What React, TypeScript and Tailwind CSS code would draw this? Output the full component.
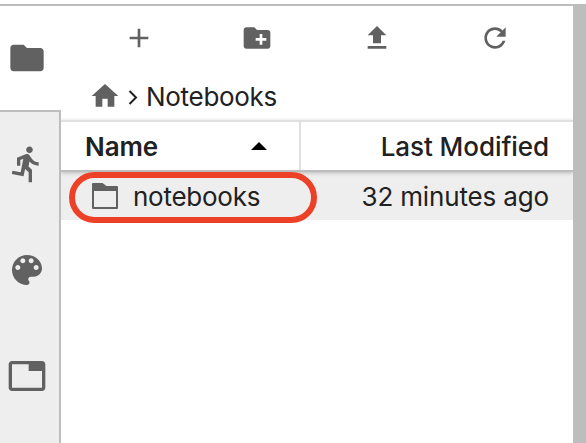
import React from "react";

function Icon({ d, className }: { d: string; className: string }) {
  return (
    <svg viewBox="0 0 24 24" fill="#616161" className={`block shrink-0 ${className}`}>
      <path d={d} />
    </svg>
  );
}

const FOLDER = "M10 4H4c-1.1 0-1.99.9-1.99 2L2 18c0 1.1.9 2 2 2h16c1.1 0 2-.9 2-2V8c0-1.1-.9-2-2-2h-8l-2-2z";
const RUN =
  "M13.49 5.48c1.1 0 2-.9 2-2s-.9-2-2-2-2 .9-2 2 .9 2 2 2zm-3.6 13.9l1-4.4 2.1 2v6h2v-7.5l-2.1-2 .6-3c1.3 1.5 3.3 2.5 5.5 2.5v-2c-1.9 0-3.5-1-4.3-2.4l-1-1.6c-.4-.6-1-1-1.7-1-.3 0-.5.1-.8.1l-5.2 2.2v4.7h2v-3.4l1.8-.7-1.6 8.1-4.9-1-.4 2 7 1.4z";
const PALETTE =
  "M12 3c-4.97 0-9 4.03-9 9s4.03 9 9 9c.83 0 1.5-.67 1.5-1.5 0-.39-.15-.74-.39-1.01-.23-.26-.38-.61-.38-.99 0-.83.67-1.5 1.5-1.5H16c2.76 0 5-2.24 5-5 0-4.42-4.03-8-9-8zm-5.5 9c-.83 0-1.5-.67-1.5-1.5S5.67 9 6.5 9 8 9.67 8 10.5 7.33 12 6.5 12zm3-4C8.67 8 8 7.33 8 6.5S8.67 5 9.5 5s1.5.67 1.5 1.5S10.33 8 9.5 8zm5 0c-.83 0-1.5-.67-1.5-1.5S13.67 5 14.5 5s1.5.67 1.5 1.5S15.33 8 14.5 8zm3 4c-.83 0-1.5-.67-1.5-1.5S16.67 9 17.5 9s1.5.67 1.5 1.5-.67 1.5-1.5 1.5z";
const TAB =
  "M21 3H3c-1.1 0-2 .9-2 2v14c0 1.1.9 2 2 2h18c1.1 0 2-.9 2-2V5c0-1.1-.9-2-2-2zm0 16H3V5h10v4h8v10z";
const ADD = "M19 13h-6v6h-2v-6H5v-2h6V5h2v6h6v2z";
const NEW_FOLDER =
  "M20 6h-8l-2-2H4c-1.11 0-1.99.89-1.99 2L2 18c0 1.11.89 2 2 2h16c1.11 0 2-.89 2-2V8c0-1.11-.89-2-2-2zm-1 8h-3v3h-2v-3h-3v-2h3V9h2v3h3v2z";
const UPLOAD = "M9 16h6v-6h4l-7-7-7 7h4zm-4 2h14v2H5z";
const REFRESH =
  "M17.65 6.35C16.2 4.9 14.21 4 12 4c-4.42 0-7.99 3.58-7.99 8s3.57 8 7.99 8c3.73 0 6.84-2.55 7.73-6h-2.08c-.82 2.33-3.04 4-5.65 4-3.31 0-6-2.69-6-6s2.69-6 6-6c1.66 0 3.14.69 4.22 1.78L13 11h7V4l-2.35 2.35z";
const HOME = "M10 20v-6h4v6h5v-8h3L12 3 2 12h3v8z";

function Sidebar() {
  return (
    <nav className="flex w-[61px] shrink-0 flex-col">
      <div className="h-[104px] pl-[7px] pt-8">
        <Icon d={FOLDER} className="size-10" />
      </div>
      <div className="flex grow flex-col gap-[66px] border-r-2 border-t-2 border-[#bdbdbd] bg-[#eeeeee] pl-[7px] pt-8">
        <Icon d={RUN} className="size-10" />
        <Icon d={PALETTE} className="size-10" />
        <Icon d={TAB} className="size-10" />
      </div>
    </nav>
  );
}

function FileBrowser() {
  return (
    <main className="flex w-[512px] shrink-0 flex-col overflow-hidden">
      <div className="flex h-16 pl-[62px] pt-4">
        <Icon d={ADD} className="size-8" />
        <Icon d={NEW_FOLDER} className="ml-[86px] size-8" />
        <Icon d={UPLOAD} className="ml-[88px] size-8" />
        <Icon d={REFRESH} className="ml-[86px] size-8" />
      </div>
      <div className="flex h-[50px] items-center pb-[1px] pl-7 pt-[4px]">
        <Icon d={HOME} className="mb-[2px] size-8" />
        <svg viewBox="0 0 10 15" className="ml-[7px] mt-[1px] h-[15px] w-[10px]" fill="none" stroke="#212121" strokeWidth="2">
          <path d="M1.5 1 8 7.5 1.5 14" />
        </svg>
        <span className="ml-2 text-[26px] leading-8 tracking-[-0.3px]">Notebooks</span>
      </div>
      <div className="relative flex h-[52px] border-b-2 border-t-2 border-b-[#bdbdbd] border-t-[#e0e0e0] bg-white shadow-[0_1px_4px_rgba(0,0,0,0.22)]">
        <div className="flex w-60 items-center justify-between border-r-2 border-[#e0e0e0] pl-6 pr-8">
          <span className="pt-[2px] text-[26px] font-semibold leading-8 tracking-[-0.1px]">Name</span>
          <svg viewBox="0 0 16 8" className="h-2 w-4">
            <path d="M0 8 8 0l8 8z" fill="#000" />
          </svg>
        </div>
        <div className="flex grow items-center justify-end pr-6">
          <span className="pt-[2px] text-[26px] font-medium leading-8 tracking-[-0.06px]">Last Modified</span>
        </div>
      </div>
      <div className="relative -z-10 flex h-12 items-center bg-[#eeeeee] pl-[31px] pr-6">
        <svg viewBox="0 0 26 26" className="h-[26px] w-[26px]">
          <path fill="#616161" fillRule="evenodd" d="M1 0h9.5l4 3H25q1 0 1 1v21q0 1-1 1H1q-1 0-1-1V1q0-1 1-1zM2 8v16h22V8z" />
        </svg>
        <span className="ml-[15px] pt-[2px] text-[26px] leading-8 tracking-[-0.25px]">notebooks</span>
        <span className="ml-auto pt-[2px] text-[26px] leading-8 tracking-[-0.15px]">32 minutes ago</span>
      </div>
    </main>
  );
}

export default function App() {
  return (
    <div className="relative isolate h-[443px] w-[586px] overflow-hidden bg-white pt-1 font-['Inter','Liberation_Sans',sans-serif] text-[#212121]">
      <div className="flex h-full border-t-2 border-[#bdbdbd]">
        <Sidebar />
        <FileBrowser />
        <div className="grow bg-[#bdbdbd]" />
      </div>
      <div className="absolute left-[69px] top-[172px] h-[51px] w-[248px] rounded-full border-[6px] border-[#ec4126]" />
    </div>
  );
}
